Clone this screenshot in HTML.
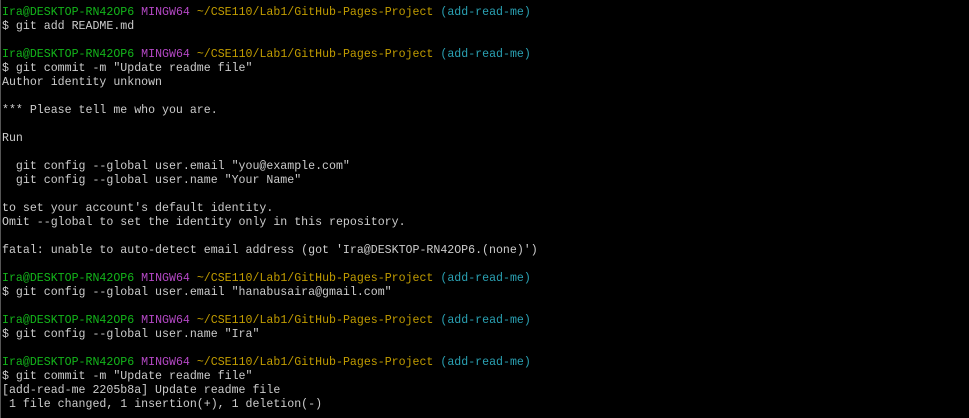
<!DOCTYPE html>
<html><head><style>
html,body{margin:0;padding:0;background:#000;width:969px;height:418px;overflow:hidden}
pre{margin:0;position:absolute;left:2px;top:6px;font-family:"Liberation Mono",monospace;font-size:11.6px;line-height:14px;color:#cccccc;white-space:pre}
.g{color:#13b51a}.m{color:#b548c6}.y{color:#c19c00}.c{color:#2aa1b3}
.bar{position:absolute;left:0;top:0;width:1px;height:418px;background:#555}
</style></head><body><div class="bar"></div><pre><span class="g">Ira@DESKTOP-RN42OP6</span> <span class="m">MINGW64</span> <span class="y">~/CSE110/Lab1/GitHub-Pages-Project</span> <span class="c">(add-read-me)</span>
$ git add README.md

<span class="g">Ira@DESKTOP-RN42OP6</span> <span class="m">MINGW64</span> <span class="y">~/CSE110/Lab1/GitHub-Pages-Project</span> <span class="c">(add-read-me)</span>
$ git commit -m "Update readme file"
Author identity unknown

*** Please tell me who you are.

Run

  git config --global user.email "you@example.com"
  git config --global user.name "Your Name"

to set your account's default identity.
Omit --global to set the identity only in this repository.

fatal: unable to auto-detect email address (got 'Ira@DESKTOP-RN42OP6.(none)')

<span class="g">Ira@DESKTOP-RN42OP6</span> <span class="m">MINGW64</span> <span class="y">~/CSE110/Lab1/GitHub-Pages-Project</span> <span class="c">(add-read-me)</span>
$ git config --global user.email "hanabusaira@gmail.com"

<span class="g">Ira@DESKTOP-RN42OP6</span> <span class="m">MINGW64</span> <span class="y">~/CSE110/Lab1/GitHub-Pages-Project</span> <span class="c">(add-read-me)</span>
$ git config --global user.name "Ira"

<span class="g">Ira@DESKTOP-RN42OP6</span> <span class="m">MINGW64</span> <span class="y">~/CSE110/Lab1/GitHub-Pages-Project</span> <span class="c">(add-read-me)</span>
$ git commit -m "Update readme file"
[add-read-me 2205b8a] Update readme file
 1 file changed, 1 insertion(+), 1 deletion(-)</pre></body></html>
